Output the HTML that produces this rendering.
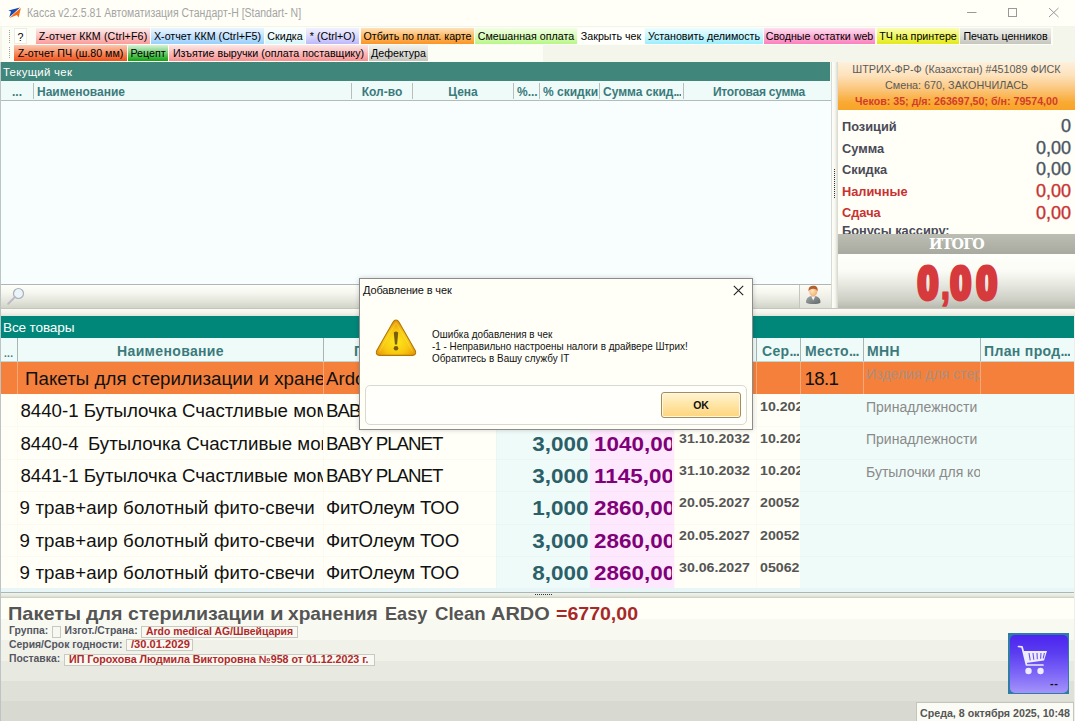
<!DOCTYPE html>
<html lang="ru">
<head>
<meta charset="utf-8">
<title>Касса</title>
<style>
*{box-sizing:border-box;margin:0;padding:0}
html,body{width:1075px;height:721px;overflow:hidden}
body{position:relative;background:#f4f6ec;font-family:"Liberation Sans",sans-serif;font-size:11px;color:#000}
.a{position:absolute;white-space:nowrap}
.t{position:absolute;white-space:nowrap;line-height:1}
/* title */
#titlebar{left:0;top:0;width:1075px;height:26px;background:#fffff7}
#title{left:27px;top:7px;font-size:12px;color:#a4a4a4;transform:scaleX(0.873);transform-origin:0 0}
/* toolbar */
.tb{position:absolute;height:16px;white-space:nowrap;text-align:center;font-size:10.7px;line-height:17px;color:#000;overflow:hidden}
/* headers */
.teal1{background:#40867a}
.teal2{background:#00877a}
.hdr{position:absolute;background:#effbf8;border-bottom:1px solid #c9cfcc}
.hc{position:absolute;top:0;height:100%;font-weight:bold;color:#3b7a7c;white-space:nowrap;overflow:hidden}
.sep{position:absolute;width:1px;background:#b9bdbb}
/* rows */
.row{position:absolute;left:0;width:1075px;height:33px}
.cell{position:absolute;top:0;height:100%;white-space:nowrap;overflow:hidden}
.nm{font-size:18.7px;line-height:34px;color:#111}
.q{font-size:19.8px;font-weight:bold;color:#2b6068;text-align:right;line-height:35px}
.q span{display:inline-block;transform:scaleX(1.135);transform-origin:100% 50%}
.p{font-size:19.8px;font-weight:bold;color:#800078;line-height:35px}
.p span{display:inline-block;transform:scaleX(1.135);transform-origin:0 50%}
.d{font-size:13px;font-weight:bold;color:#555;line-height:15px}
.d span{display:inline-block;transform:scaleX(1.09);transform-origin:0 50%}
.m{font-size:14px;color:#8a8a8a;line-height:16px}
.sm{font-size:10.4px;font-weight:bold;color:#555560}
.bx{height:12px;border:1px solid #c9c9c0;background:#f9f9f3;font-size:10.67px;font-weight:bold;color:#b02828;line-height:9px;white-space:nowrap;overflow:hidden;padding-left:4px}
.bx span{display:inline-block;transform-origin:0 50%}
.dm{font-size:11px;color:#111;transform:scaleX(0.9);transform-origin:0 0}
.dd{letter-spacing:-0.7px}
.w{position:absolute;top:0;display:inline-block;transform-origin:0 0;line-height:1}
.val{-webkit-text-stroke:0.35px currentColor}
</style>
</head>
<body>
<!-- TITLE BAR -->
<div class="a" id="titlebar"></div>
<svg class="a" style="left:8px;top:6.5px" width="14" height="12" viewBox="0 0 14 12">
  <path d="M0.4 3.6 L12 0.4 L5.2 6.8 L1.2 10.2 L3 4.4 Z" fill="#1848b0"/>
  <path d="M12.9 0.9 L10.6 10.6 L8.9 7.9 L1.6 11 L6.2 6.6 Z" fill="#f86810"/>
</svg>
<div class="t" id="title">Касса v2.2.5.81 Автоматизация Стандарт-Н [Standart- N]</div>
<svg class="a" style="left:960px;top:0" width="115" height="26" viewBox="0 0 115 26">
  <path d="M7 12.5 H16.5" stroke="#999" stroke-width="1" fill="none"/>
  <rect x="48.5" y="8.5" width="8" height="8" stroke="#999" stroke-width="1" fill="none"/>
  <path d="M89 8 L98.5 17 M98.5 8 L89 17" stroke="#999" stroke-width="1" fill="none"/>
</svg>

<!-- TOOLBAR -->
<div class="a" id="toolbar" style="left:0;top:26px;width:1075px;height:36px;background:#f4f6ec"></div>
<div class="a" style="left:2px;top:27px;width:1051px;height:18px;background:#fcfdf4"></div>
<div class="a" style="left:2px;top:45px;width:541px;height:17px;background:#fcfdf4"></div>
<svg class="a" style="left:8px;top:28px" width="4" height="34" viewBox="0 0 4 34">
  <g fill="#a0a0a0">
    <rect x="1" y="2" width="1" height="1"/><rect x="1" y="4" width="1" height="1"/><rect x="1" y="6" width="1" height="1"/><rect x="1" y="8" width="1" height="1"/><rect x="1" y="10" width="1" height="1"/><rect x="1" y="12" width="1" height="1"/><rect x="1" y="14" width="1" height="1"/>
    <rect x="1" y="19" width="1" height="1"/><rect x="1" y="21" width="1" height="1"/><rect x="1" y="23" width="1" height="1"/><rect x="1" y="25" width="1" height="1"/><rect x="1" y="27" width="1" height="1"/><rect x="1" y="29" width="1" height="1"/>
  </g>
</svg>
<div class="tb" style="left:14px;top:28px;width:13px;background:#fffffb;border:1px solid #ecece4;line-height:16px">?</div>
<div class="tb" id="b1" style="left:36px;top:28px;width:114px;letter-spacing:0.1px;background:linear-gradient(#fdecec,#fbc4c4 50%,#fa9c9c)">Z-отчет ККМ (Ctrl+F6)</div>
<div class="tb" id="b2" style="left:151px;top:28px;width:113px;background:linear-gradient(#ecf5ff,#c4e2fd 50%,#98d0fc)">X-отчет ККМ (Ctrl+F5)</div>
<div class="tb" id="b3" style="left:265px;top:28px;width:40px;background:linear-gradient(#fbfffe,#ecfbfd 50%,#d4f6fa)">Скидка</div>
<div class="tb" id="b4" style="left:306px;top:28px;width:53px;background:linear-gradient(#f2f1ff,#dcdafd 50%,#bcb8fb)">* (Ctrl+O)</div>
<div class="tb" id="b5" style="left:361px;top:28px;width:113px;background:linear-gradient(#fde2bc,#fcba68 50%,#fb9424)">Отбить по плат. карте</div>
<div class="tb" id="b6" style="left:475px;top:28px;width:102px;background:linear-gradient(#f2fee4,#dafbbc 50%,#b8f788)">Смешанная оплата</div>
<div class="tb" id="b7" style="left:578px;top:28px;width:66px;background:#fffffb">Закрыть чек</div>
<div class="tb" id="b8" style="left:645px;top:28px;width:118px;background:linear-gradient(#ecfdff,#c8f6fe 50%,#9ceefd)">Установить делимость</div>
<div class="tb" id="b9" style="left:764px;top:28px;width:111px;background:linear-gradient(#fde0f0,#fcb0d6 50%,#fb80bc)">Сводные остатки web</div>
<div class="tb" id="b10" style="left:877px;top:28px;width:82px;background:linear-gradient(#fbfdb0,#f0f560 50%,#e2ea18)">ТЧ на принтере</div>
<div class="tb" id="b11" style="left:960px;top:28px;width:91px;background:linear-gradient(#f2f2ec,#dededa 50%,#c6c6be)">Печать ценников</div>

<div class="tb" id="c1" style="left:14px;top:45px;width:113px;background:linear-gradient(#fbc8b0,#f68c60 50%,#f05018)">Z-отчет ПЧ (ш.80 мм)</div>
<div class="tb" id="c2" style="left:128px;top:45px;width:40px;background:linear-gradient(#d8f3d8,#70cc70 50%,#10a410)">Рецепт</div>
<div class="tb" id="c3" style="left:169px;top:45px;width:199px;background:linear-gradient(#fde6e6,#fbbcbc 50%,#f99090)">Изъятие выручки (оплата поставщику)</div>
<div class="tb" id="c4" style="left:369px;top:45px;width:59px;background:linear-gradient(#f2f2ec,#dededa 50%,#c6c6be)">Дефектура</div>

<!-- CURRENT CHECK -->
<div class="a teal1" style="left:0;top:62px;width:830px;height:19px"></div>
<div class="t" id="tchk" style="left:3px;top:66.6px;font-size:11.4px;color:#fff;letter-spacing:0.3px">Текущий чек</div>
<div class="hdr" style="left:0;top:81px;width:831px;height:20px;font-size:12px;line-height:22px;border-bottom:1px solid #b4bcba">
  <div class="hc" style="left:12px">...</div>
  <div class="hc" id="h1" style="left:37px">Наименование</div>
  <div class="hc" id="h2" style="left:352px;width:60px;text-align:center">Кол-во</div>
  <div class="hc" id="h3" style="left:413px;width:100px;text-align:center">Цена</div>
  <div class="hc" id="h4" style="left:517px">%...</div>
  <div class="hc" id="h5" style="left:543px">% скидки</div>
  <div class="hc" id="h6" style="left:603px">Сумма скид<span class="dd">...</span></div>
  <div class="hc" id="h7" style="left:686px;width:146px;text-align:center;letter-spacing:-0.25px">Итоговая сумма</div>
  <div class="sep" style="left:33px;top:2px;height:16px"></div>
  <div class="sep" style="left:351px;top:2px;height:16px"></div>
  <div class="sep" style="left:412px;top:2px;height:16px"></div>
  <div class="sep" style="left:513px;top:2px;height:16px"></div>
  <div class="sep" style="left:539px;top:2px;height:16px"></div>
  <div class="sep" style="left:599px;top:2px;height:16px"></div>
  <div class="sep" style="left:683px;top:2px;height:16px"></div>
</div>
<div class="a" style="left:0;top:101px;width:831px;height:183px;background:#f7fefd"></div>
<!-- search row -->
<div class="a" style="left:0;top:284px;width:831px;height:24px;border-top:1px solid #b0b6b6;background:linear-gradient(#fffffa 0,#f5f6ee 35%,#e3e5db 70%,#d0d3c8 100%)"></div>
<div class="a" style="left:0;top:308px;width:1075px;height:8px;background:linear-gradient(#c4c6be 0,#c4c6be 1px,#fbfbf3 1px,#f2f3ea 5px,#e2e4da 8px)"></div>
<svg class="a" style="left:6px;top:286px" width="20" height="20" viewBox="0 0 20 20">
  <circle cx="12.5" cy="7.5" r="5" fill="#eaf4f9" stroke="#aab0ba" stroke-width="1.2"/>
  <path d="M8.8 11.2 L2.2 17.8" stroke="#bcb6c6" stroke-width="1.9" stroke-linecap="round"/>
</svg>

<!-- splitter -->
<div class="a" style="left:831px;top:62px;width:7px;height:246px;background:linear-gradient(90deg,#c4cac6 0,#fdfdf7 1.5px,#f6f7ef 4px,#d4d6cc 7px)"></div>

<svg class="a" style="left:833px;top:168px" width="3" height="32" viewBox="0 0 3 32"><g fill="#333"><rect x="1" y="1" width="1" height="1"/><rect x="1" y="3" width="1" height="1"/><rect x="1" y="5" width="1" height="1"/><rect x="1" y="7" width="1" height="1"/><rect x="1" y="9" width="1" height="1"/><rect x="1" y="11" width="1" height="1"/><rect x="1" y="13" width="1" height="1"/><rect x="1" y="15" width="1" height="1"/><rect x="1" y="17" width="1" height="1"/><rect x="1" y="19" width="1" height="1"/><rect x="1" y="21" width="1" height="1"/><rect x="1" y="23" width="1" height="1"/><rect x="1" y="25" width="1" height="1"/><rect x="1" y="27" width="1" height="1"/><rect x="1" y="29" width="1" height="1"/></g></svg>
<!-- RIGHT PANEL -->
<div class="a" id="rp" style="left:838px;top:62px;width:237px;height:246px;background:#fffff7"></div>
<div class="a" style="left:838px;top:62px;width:237px;height:48px;background:linear-gradient(#fdf0dc 0,#fde2bc 28%,#fbc478 58%,#f9aa34 84%,#f8a428 100%)"></div>
<div class="t" id="r1" style="left:838px;width:237px;text-align:center;top:64px;font-size:10.8px;color:#5a5a5a">ШТРИХ-ФР-Ф (Казахстан) #451089 ФИСК</div>
<div class="t" id="r2" style="left:838px;width:237px;text-align:center;top:80px;font-size:10.8px;color:#5a5a5a">Смена: 670, ЗАКОНЧИЛАСЬ</div>
<div class="t" id="r3" style="left:838px;width:237px;text-align:center;top:96px;font-size:10.67px;font-weight:bold;color:#d23c2c">Чеков: 35; д/я: 263697,50; б/н: 79574,00</div>

<div class="t lab" style="left:842px;top:121.3px;font-size:12.8px;font-weight:bold;color:#4a4a58">Позиций</div>
<div class="t lab" style="left:842px;top:142.8px;font-size:12.8px;font-weight:bold;color:#4a4a58">Сумма</div>
<div class="t lab" style="left:842px;top:164.4px;font-size:12.8px;font-weight:bold;color:#4a4a58">Скидка</div>
<div class="t lab" style="left:842px;top:185.8px;font-size:12.8px;font-weight:bold;color:#c83232">Наличные</div>
<div class="t lab" style="left:842px;top:207.4px;font-size:12.8px;font-weight:bold;color:#c83232">Сдача</div>
<div class="t lab" style="left:842px;top:224.6px;font-size:12.8px;font-weight:bold;color:#4a4a58">Бонусы кассиру:</div>
<div class="t val" id="v1" style="right:4px;top:117px;font-size:18px;color:#4a5562">0</div>
<div class="t val" id="v2" style="right:4px;top:139px;font-size:18px;color:#4a5562">0,00</div>
<div class="t val" style="right:4px;top:160px;font-size:18px;color:#4a5562">0,00</div>
<div class="t val" style="right:4px;top:182px;font-size:18px;color:#c83232">0,00</div>
<div class="t val" style="right:4px;top:204px;font-size:18px;color:#c83232">0,00</div>
<div class="a" style="left:838px;top:234px;width:237px;height:20px;background:linear-gradient(#bcbeb4,#b2b4aa 50%,#a8aaa0)"></div>
<div class="t" id="itogo" style="left:838px;width:237px;text-align:center;top:237px;font-family:'DejaVu Serif',serif;font-weight:bold;font-size:14.3px;letter-spacing:-0.8px;color:#fff">ИТОГО</div>
<div class="a" style="left:838px;top:254px;width:237px;height:54px;background:linear-gradient(#fffffb 0,#fcfcf6 30%,#eceee6 50%,#dcded5 68%,#cccec4 86%,#b8bab0 100%)"></div>
<svg class="a" id="big" style="left:838px;top:254px" width="237" height="55" viewBox="0 0 237 55">
  <g transform="translate(79.7,0) scale(0.8,1)">
    <text y="45" font-family="Liberation Sans, sans-serif" font-weight="bold" font-size="46" fill="#d63a3c" stroke="#d63a3c" stroke-width="5" stroke-linejoin="round"><tspan x="0">0</tspan><tspan x="28.5" stroke-width="1.5" font-size="44">,</tspan><tspan x="40.9 73.4">00</tspan></text>
  </g>
</svg>

<!-- user icon box -->
<div class="a" style="left:799px;top:285px;width:32px;height:23px;border-left:1px solid #c4c6c0;background:linear-gradient(#fdfdf6,#f0f0e8 50%,#dedfd6)"></div>
<svg class="a" style="left:805px;top:285px" width="17" height="21" viewBox="0 0 17 21">
  <defs><radialGradient id="sk" cx="0.4" cy="0.4" r="0.7"><stop offset="0" stop-color="#ffe4c0"/><stop offset="1" stop-color="#f0a868"/></radialGradient>
  <linearGradient id="bd" x1="0" y1="0" x2="1" y2="1"><stop offset="0" stop-color="#a0a8a8"/><stop offset="1" stop-color="#606868"/></linearGradient></defs>
  <path d="M1 17.5 C1 12.5 4 11 8.2 11 C12.5 11 15.5 12.5 15.5 17.5 C14 19.6 3 19.6 1 17.5 Z" fill="url(#bd)"/>
  <path d="M6.2 11.2 L8.2 15.5 L10.3 11.2 Z" fill="#f4f4f4"/>
  <ellipse cx="8.2" cy="6.8" rx="4" ry="4.6" fill="url(#sk)"/>
  <path d="M3.6 6.5 C3 1.5 6 0.8 8.5 0.8 C11.5 0.8 13.2 2.5 12.6 6.8 C12 4.5 10.5 3.8 8 3.8 C5.8 3.8 4.4 4.6 3.6 6.5Z" fill="#b4602c"/>
</svg>

<!-- ALL GOODS -->
<div class="a teal2" style="left:0;top:316px;width:1075px;height:22px"></div>
<div class="t" id="allg" style="left:3px;top:321px;font-size:13.6px;letter-spacing:-0.15px;color:#fff">Все товары</div>
<div class="hdr" style="left:0;top:338px;width:1075px;height:24px;font-size:14px;letter-spacing:0.35px;line-height:27px;border-bottom:1px solid #c0d8d4">
  <div class="hc" style="left:4px;font-size:10px;letter-spacing:0.3px;line-height:31px">...</div>
  <div class="hc" id="g1" style="left:18px;width:305px;text-align:center">Наименование</div>
  <div class="hc" id="g2" style="left:354px">П</div>
  <div class="hc" id="g3" style="left:762px">Сер<span class="dd">...</span></div>
  <div class="hc" id="g4" style="left:805px">Место<span class="dd">...</span></div>
  <div class="hc" id="g5" style="left:867px">МНН</div>
  <div class="hc" id="g6" style="left:984px">План прод<span class="dd">...</span></div>
  <div class="sep" style="left:17px;top:0;height:23px;background:#aab4b2"></div>
  <div class="sep" style="left:323px;top:0;height:23px;background:#aab4b2"></div>
  <div class="sep" style="left:756px;top:0;height:23px;background:#aab4b2"></div>
  <div class="sep" style="left:800px;top:0;height:23px;background:#aab4b2"></div>
  <div class="sep" style="left:863px;top:0;height:23px;background:#aab4b2"></div>
  <div class="sep" style="left:980px;top:0;height:23px;background:#aab4b2"></div>
</div>

<!-- grid body -->
<div class="a" id="grid" style="left:0;top:362px;width:1075px;height:230px;background:#fffff7;overflow:hidden">
  <div class="a" style="left:496px;top:0;width:94px;height:226px;background:#effbf8"></div>
  <div class="a" style="left:590px;top:0;width:84px;height:226px;background:#fde8fd"></div>
  <div class="a" style="left:800px;top:0;width:275px;height:230px;background:#effbf8"></div>
  <div class="a" style="left:0;top:226px;width:1075px;height:4px;background:#e8f6f8"></div>

  <div class="a" style="left:0;top:64px;width:1075px;height:1px;background:rgba(120,120,90,0.03)"></div>
  <div class="a" style="left:0;top:97px;width:1075px;height:1px;background:rgba(120,120,90,0.03)"></div>
  <div class="a" style="left:0;top:129px;width:1075px;height:1px;background:rgba(120,120,90,0.03)"></div>
  <div class="a" style="left:0;top:162px;width:1075px;height:1px;background:rgba(120,120,90,0.03)"></div>
  <div class="a" style="left:0;top:194px;width:1075px;height:1px;background:rgba(120,120,90,0.03)"></div>
  <div class="a" style="left:17px;top:32px;width:1px;height:194px;background:rgba(120,120,90,0.03)"></div>
  <div class="a" style="left:323px;top:32px;width:1px;height:194px;background:rgba(120,120,90,0.03)"></div>
  <div class="a" style="left:496px;top:32px;width:1px;height:194px;background:rgba(120,120,90,0.03)"></div>
  <div class="a" style="left:674px;top:32px;width:1px;height:194px;background:rgba(120,120,90,0.03)"></div>
  <div class="a" style="left:756px;top:32px;width:1px;height:194px;background:rgba(120,120,90,0.03)"></div>
  <div class="row" style="top:0;height:32px;background:#f5803c">
    <div class="cell nm" id="n0" style="left:25px;width:298px;line-height:34px;letter-spacing:0.05px">Пакеты для стерилизации и хранения Easy Clean</div>
    <div class="cell nm" style="left:326px;width:161px;line-height:34px">Ardo medical AG</div>
    <div class="cell nm" id="m0" style="left:804.5px;width:55px;letter-spacing:-0.7px;line-height:34px">18.1</div>
    <div class="cell m" style="left:866px;width:114px;color:#a89080;top:4px">Изделия для стерилизации</div>
    <div class="sep" style="left:17px;top:0;height:32px;background:#f8a878"></div>
    <div class="sep" style="left:323px;top:0;height:32px;background:#f8a878"></div>
    <div class="sep" style="left:756px;top:0;height:32px;background:#f8a878"></div>
    <div class="sep" style="left:800px;top:0;height:32px;background:#f8a878"></div>
    <div class="sep" style="left:863px;top:0;height:32px;background:#f8a878"></div>
    <div class="sep" style="left:980px;top:0;height:32px;background:#f8a878"></div>
  </div>
  <div class="row" style="top:32px">
    <div class="cell nm" id="n1" style="left:20.4px;width:302.6px">8440-1 Бутылочка Счастливые момент</div>
    <div class="cell nm" style="left:326px;width:161px;letter-spacing:-1px">BABY PLANET</div>
    <div class="cell q" style="left:496px;width:93px"><span>3,000</span></div>
    <div class="cell p" style="left:593.5px;width:78.5px"><span>985,00</span></div>
    <div class="cell d" style="left:679px;width:77px;top:5px"><span>31.10.2032</span></div>
    <div class="cell d" style="left:760px;width:40px;top:5px"><span>10.2022</span></div>
    <div class="cell m" style="left:866px;width:114px;top:5px">Принадлежности</div>
  </div>
  <div class="row" style="top:65px">
    <div class="cell nm" style="left:20.4px;width:302.6px">8440-4<span style="letter-spacing:-1px">&nbsp;</span> Бутылочка Счастливые момент</div>
    <div class="cell nm" style="left:326px;width:161px;letter-spacing:-1px">BABY PLANET</div>
    <div class="cell q" id="q2" style="left:496px;width:93px"><span>3,000</span></div>
    <div class="cell p" id="p2" style="left:593.5px;width:78.5px"><span>1040,00</span></div>
    <div class="cell d" id="d2" style="left:679px;width:77px;top:4px"><span>31.10.2032</span></div>
    <div class="cell d" style="left:760px;width:40px;top:4px"><span>10.2022</span></div>
    <div class="cell m" id="mm2" style="left:866px;width:114px;top:4px">Принадлежности</div>
  </div>
  <div class="row" style="top:97px">
    <div class="cell nm" style="left:20.4px;width:302.6px">8441-1 Бутылочка Счастливые момент</div>
    <div class="cell nm" style="left:326px;width:161px;letter-spacing:-1px">BABY PLANET</div>
    <div class="cell q" style="left:496px;width:93px"><span>3,000</span></div>
    <div class="cell p" style="left:593.5px;width:78.5px"><span>1145,00</span></div>
    <div class="cell d" style="left:679px;width:77px;top:4px"><span>31.10.2032</span></div>
    <div class="cell d" style="left:760px;width:40px;top:4px"><span>10.2022</span></div>
    <div class="cell m" style="left:866px;width:114px;top:5px">Бутылочки для кормления</div>
  </div>
  <div class="row" style="top:129px">
    <div class="cell nm" id="n4" style="left:19.6px;width:303.4px;letter-spacing:0.12px">9 трав+аир болотный фито-свечи</div>
    <div class="cell nm" id="f4" style="left:326px;width:161px;letter-spacing:-0.2px">ФитОлеум ТОО</div>
    <div class="cell q" style="left:496px;width:93px"><span>1,000</span></div>
    <div class="cell p" style="left:593.5px;width:78.5px"><span>2860,00</span></div>
    <div class="cell d" style="left:679px;width:77px;top:4px"><span>20.05.2027</span></div>
    <div class="cell d" style="left:760px;width:40px;top:4px"><span>200525</span></div>
  </div>
  <div class="row" style="top:162px">
    <div class="cell nm" style="left:19.6px;width:303.4px;letter-spacing:0.12px">9 трав+аир болотный фито-свечи</div>
    <div class="cell nm" style="left:326px;width:161px;letter-spacing:-0.2px">ФитОлеум ТОО</div>
    <div class="cell q" style="left:496px;width:93px"><span>3,000</span></div>
    <div class="cell p" style="left:593.5px;width:78.5px"><span>2860,00</span></div>
    <div class="cell d" style="left:679px;width:77px;top:4px"><span>20.05.2027</span></div>
    <div class="cell d" style="left:760px;width:40px;top:4px"><span>200525</span></div>
  </div>
  <div class="row" style="top:194px">
    <div class="cell nm" style="left:19.6px;width:303.4px;letter-spacing:0.12px">9 трав+аир болотный фито-свечи</div>
    <div class="cell nm" style="left:326px;width:161px;letter-spacing:-0.2px">ФитОлеум ТОО</div>
    <div class="cell q" style="left:496px;width:93px"><span>8,000</span></div>
    <div class="cell p" style="left:593.5px;width:78.5px"><span>2860,00</span></div>
    <div class="cell d" style="left:679px;width:77px;top:4px"><span>30.06.2027</span></div>
    <div class="cell d" style="left:760px;width:40px;top:4px"><span>050625</span></div>
  </div>
</div>

<!-- bottom splitter -->
<div class="a" style="left:0;top:592px;width:1075px;height:6px;background:linear-gradient(#a8b8b8 0,#a8b8b8 1px,#f2f4ea 1px,#e6e8dc 4px,#c8ccc0 6px)"></div>

<svg class="a" style="left:535px;top:593px" width="20" height="3" viewBox="0 0 20 3"><g fill="#333"><rect x="0" y="1" width="1" height="1"/><rect x="2" y="1" width="1" height="1"/><rect x="4" y="1" width="1" height="1"/><rect x="6" y="1" width="1" height="1"/><rect x="8" y="1" width="1" height="1"/><rect x="10" y="1" width="1" height="1"/><rect x="12" y="1" width="1" height="1"/><rect x="14" y="1" width="1" height="1"/><rect x="16" y="1" width="1" height="1"/></g></svg>
<!-- INFO PANEL -->
<div class="a" id="info" style="left:0;top:598px;width:1075px;height:123px;background:linear-gradient(#fffff8 0,#fffff8 21px,#f8faf2 21px,#f8faf2 42px,#f0f2ea 42px,#f0f2ea 63px,#e8eae2 63px,#e8eae2 82.5px,#dfe1d9 82.5px,#dfe1d9 103px,#d8dad2 103px)"></div>
<div class="t" id="it" style="left:0;top:603.7px;width:700px;height:22px;font-size:19px;font-weight:bold;color:#555"><span class="w" style="left:8.4px;transform:scaleX(1.051)">Пакеты</span> <span class="w" style="left:86.2px;transform:scaleX(1.035)">для</span> <span class="w" style="left:127.6px;transform:scaleX(1.033)">стерилизации</span> <span class="w" style="left:270.1px;transform:scaleX(1.167)">и</span> <span class="w" style="left:288.0px;transform:scaleX(1.008)">хранения</span> <span class="w" style="left:385.0px;transform:scaleX(0.953)">Easy</span> <span class="w" style="left:434.7px;transform:scaleX(0.980)">Clean</span> <span class="w" style="left:491.2px;transform:scaleX(1.050)">ARDO</span> <span class="w" style="left:555.7px;transform:scaleX(1.028);color:#a82828">=6770,00</span></div>
<div class="t sm" id="l1" style="left:9px;top:626px">Группа:</div>
<div class="a" style="left:52px;top:626px;width:9px;height:12px;border:1px solid #c8c8c0;background:#f8f8f2"></div>
<div class="t sm" id="l2" style="left:64.5px;top:626px">Изгот./Страна:</div>
<div class="a bx" id="x1" style="left:141px;top:626px;width:157px"><span style="transform:scaleX(0.977)">Ardo medical AG/Швейцария</span></div>
<div class="t sm" id="l3" style="left:9px;top:640px">Серия/Срок годности:</div>
<div class="a bx" id="x2" style="left:126px;top:639px;width:67px"><span style="transform:scaleX(1.045)">/30.01.2029</span></div>
<div class="t sm" id="l4" style="left:9px;top:654.4px">Поставка:</div>
<div class="a bx" id="x3" style="left:64px;top:654px;width:311px;height:11.5px"><span>ИП Горохова Людмила Викторовна №958 от 01.12.2023 г.</span></div>

<!-- cart button -->
<div class="a" style="left:1008px;top:633px;width:61px;height:61px;background:#2f7ca6"></div>
<div class="a" style="left:1009.5px;top:634.5px;width:58px;height:58px;border-radius:5px;background:linear-gradient(#4c24f0,#5a3cf0 30%,#7c64f6 65%,#a494fa)"></div>
<svg class="a" style="left:1016px;top:644px" width="34" height="32" viewBox="0 0 34 32">
  <path d="M2.5 2.5 L6 2.8 L10.5 21 L27 21" stroke="#f0ecff" stroke-width="1.7" fill="none" stroke-linejoin="round" stroke-linecap="round"/>
  <path d="M7.5 7 L31 7 L28 16.5 L10 19 Z" fill="#f0ecff"/>
  <path d="M13 9 L14.2 16.3 M17 9 L17.8 15.8 M21 9 L21.3 15.3 M25 9 L24.6 14.8 M28.4 9 L27.2 14.4" stroke="#6a50f0" stroke-width="1.1" fill="none"/>
  <circle cx="12.5" cy="27" r="3.2" fill="#f0ecff"/>
  <circle cx="24.5" cy="27" r="3.2" fill="#f0ecff"/>
</svg>
<div class="t" style="left:1050px;top:678px;font-size:11px;font-weight:bold;color:#111;letter-spacing:0.6px">--</div>

<!-- STATUS BAR -->
<div class="a" id="sb" style="left:916px;top:702px;width:158px;height:19px;border:1px solid #c4c6be;border-bottom:none;background:#fafbf4"></div>
<div class="t" id="sbt" style="left:920px;top:707.5px;font-size:10.67px;font-weight:bold;color:#555">Среда, 8 октября 2025, 10:48</div>

<!-- DIALOG -->
<div class="a" id="dlg" style="left:359px;top:278px;width:394px;height:152px;background:#fffff7;border:1px solid #8c8c8c;box-shadow:0 0 5px rgba(0,0,0,0.18)"></div>
<div class="t" id="dt" style="left:363px;top:285px;font-size:11px;color:#111;letter-spacing:-0.15px">Добавление в чек</div>
<svg class="a" style="left:733px;top:285px" width="11" height="11" viewBox="0 0 11 11"><path d="M0.8 0.8 L10.2 10.2 M10.2 0.8 L0.8 10.2" stroke="#222" stroke-width="1.1" fill="none"/></svg>
<svg class="a" style="left:373.5px;top:318px" width="44" height="40" viewBox="0 0 44 40">
  <defs>
    <radialGradient id="wg" cx="0.5" cy="0.62" r="0.6"><stop offset="0" stop-color="#fee81c"/><stop offset="0.55" stop-color="#f8c810"/><stop offset="1" stop-color="#e89404"/></radialGradient>
  </defs>
  <path d="M22 2 Q23.8 2 24.9 4 L41.2 32.6 Q43 36.6 38.8 37.4 L5.2 37.4 Q1 36.6 2.8 32.6 L19.1 4 Q20.2 2 22 2 Z" fill="url(#wg)" stroke="#b07808" stroke-width="1.1" stroke-linejoin="round"/>
  <path d="M22 4.6 L38.6 33.6" stroke="#fff6a8" stroke-width="0.7" fill="none" opacity="0.4"/>
  <path d="M22 4.6 L5.4 33.6" stroke="#fff6a8" stroke-width="0.7" fill="none" opacity="0.4"/>
  <path d="M19.8 14.6 Q22 12.6 24.2 14.6 L23.1 26.6 L20.9 26.6 Z" fill="#7a5c10"/>
  <circle cx="22" cy="30.3" r="2.3" fill="#7a5c10"/>
</svg>
<div class="t dm" id="dm1" style="left:432px;top:329px">Ошибка добавления в чек</div>
<div class="t dm" id="dm2" style="left:432px;top:341px">-1 - Неправильно настроены налоги в драйвере Штрих!</div>
<div class="t dm" id="dm3" style="left:432px;top:353px">Обратитесь в Вашу службу IT</div>
<div class="a" style="left:365px;top:385px;width:382px;height:40px;border:1px solid #d9d9d0;border-radius:5px;background:#fffffb"></div>
<div class="a" id="ok" style="left:661px;top:392px;width:80px;height:26px;border:1px solid #a88c58;border-radius:3px;background:linear-gradient(#fff4d4,#ffe6a8 45%,#fdd57c);box-shadow:inset 0 0 0 1px #fff8e4"></div>
<div class="t" style="left:661px;width:80px;text-align:center;top:399.5px;font-size:10.5px;font-weight:bold;color:#111">OK</div>

<div class="a" style="left:0;top:62px;width:1px;height:659px;background:#bcc4c6"></div>
<div class="a" style="left:1073.5px;top:316px;width:1.5px;height:405px;background:#eef0e8"></div>
</body>
</html>
